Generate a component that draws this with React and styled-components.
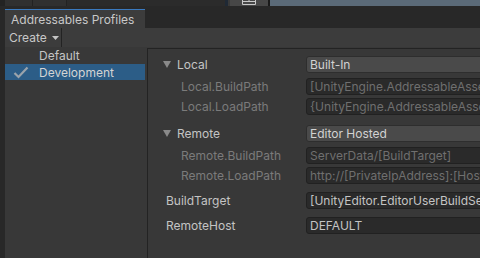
import React from "react";
import styled, { createGlobalStyle } from "styled-components";

const Global = createGlobalStyle`
  html, body { margin: 0; padding: 0; background: #282828; }
  body { font-family: Inter, "Noto Sans", sans-serif; }
  * { box-sizing: border-box; }
`;

const Screen = styled.div`
  width: 480px;
  height: 258px;
  overflow: hidden;
  display: flex;
  flex-direction: column;
  background: #282828;
  font-size: 12px;
  color: #c4c4c4;
`;

const TopStrip = styled.div`
  height: 6px;
  display: flex;
  background: #2c2c2c;
`;

const StripCell = styled.div`
  width: ${(p) => p.$w}px;
  flex: ${(p) => (p.$grow ? 1 : "none")};
  background: ${(p) => p.$bg};
  border-right: ${(p) => (p.$line ? "1px solid #222" : "none")};
  display: flex;
  justify-content: center;
`;

const TabBar = styled.div`
  height: 22px;
  display: flex;
  align-items: flex-end;
  padding-left: 5px;
  background: #282828;
`;

const Tab = styled.div`
  width: 140px;
  height: 19px;
  background: #3c3c3c;
  border-top: 1px solid #3a7ac0;
  padding: 2px 0 0 6px;
  line-height: 16px;
  color: #c8c8c8;
`;

const Window = styled.div`
  flex: 1;
  display: flex;
  flex-direction: column;
  margin-left: 5px;
  background: #383838;
  min-height: 0;
`;

const Toolbar = styled.div`
  height: 19px;
  display: flex;
  background: #3c3c3c;
`;

const ToolButton = styled.div`
  width: 57px;
  display: flex;
  align-items: center;
  gap: 5px;
  padding-left: 4px;
  border-right: 1px solid #232323;
  color: #c8c8c8;
`;

const Content = styled.div`
  flex: 1;
  display: flex;
  min-height: 0;
`;

const List = styled.div`
  width: 142px;
  padding-right: 2px;
  display: flex;
  flex-direction: column;
`;

const ListRow = styled.div`
  height: ${(p) => p.$h}px;
  display: flex;
  align-items: center;
  padding-left: 34px;
  position: relative;
  background: ${(p) => (p.$selected ? "#2c5d87" : "transparent")};
  color: ${(p) => (p.$selected ? "#d4d4d4" : "#c4c4c4")};
`;

const Check = styled.svg`
  position: absolute;
  left: 8px;
  top: 2px;
`;

const Panel = styled.div`
  flex: 1;
  margin-top: 1px;
  border-top: 1px solid #232323;
  border-left: 1px solid #232323;
  padding-top: 7px;
  overflow: hidden;
  display: flex;
  flex-direction: column;
  gap: ${(p) => p.$gap}px;
`;

const Group = styled.div`
  display: flex;
  flex-direction: column;
  gap: ${(p) => p.$gap}px;
`;

const SubRows = styled.div`
  display: flex;
  flex-direction: column;
  gap: 3px;
  padding-top: 5px;
`;

const Row = styled.div`
  height: 17px;
  display: grid;
  grid-template-columns: 158px 200px;
  align-items: center;
`;

const Label = styled.div`
  display: flex;
  align-items: center;
  gap: 6px;
  padding-left: ${(p) => p.$indent}px;
  color: ${(p) => (p.$dim ? "#7b7b7b" : "#c4c4c4")};
  white-space: nowrap;
`;

const Triangle = styled.svg`
  flex: none;
`;

const Popup = styled.div`
  height: ${(p) => p.$h || 17}px;
  border: 1px solid #2e2e2e;
  border-radius: 3px;
  background: #4a4a4a;
  padding-left: 3px;
  line-height: 15px;
  color: #d2d2d2;
  white-space: nowrap;
  overflow: hidden;
`;

const TextField = styled.div`
  height: 17px;
  border: 1px solid #212121;
  border-radius: 3px;
  background: #2a2a2a;
  padding-left: 3px;
  line-height: 15px;
  color: ${(p) => (p.$dim ? "#6f6f6f" : "#c4c4c4")};
  white-space: nowrap;
  overflow: hidden;
`;

const Fold = () => (
  <Triangle width="8" height="7" viewBox="0 0 8 7">
    <path d="M0 0 H8 L4 7 Z" fill="#8a8a8a" />
  </Triangle>
);

export default function App() {
  return (
    <Screen>
      <Global />
      <TopStrip>
        <StripCell $w={5} $bg="#232323" />
        <StripCell $w={28} $bg="#303030" $line />
        <StripCell $w={34} $bg="#303030" $line />
        <StripCell $w={158} $bg="#2b2b2b" />
        <StripCell $w={3} $bg="#1f2935" />
        <StripCell $w={2} $bg="#3a3a3a" />
        <StripCell $w={38} $bg="#474747">
          <svg width="16" height="6" viewBox="0 0 16 6">
            <path d="M1.5 0 V4.5 H14.5 V0 M1.5 1.5 H14.5 M8 0 V1.5" stroke="#c8c8c8" strokeWidth="1" fill="none" />
          </svg>
        </StripCell>
        <StripCell $w={2} $bg="#1a1a1a" />
        <StripCell $grow $bg="#5b6a78" />
      </TopStrip>
      <TabBar>
        <Tab>Addressables Profiles</Tab>
      </TabBar>
      <Window>
        <Toolbar>
          <ToolButton>
            Create
            <svg width="7" height="4" viewBox="0 0 7 4">
              <path d="M0 0 H7 L3.5 4 Z" fill="#c4c4c4" />
            </svg>
          </ToolButton>
        </Toolbar>
        <Content>
          <List>
            <ListRow $h={17}>Default</ListRow>
            <ListRow $h={16} $selected>
              <Check width="16" height="13" viewBox="0 0 16 13">
                <path d="M1.5 7 L5.5 11 L14.5 1.5" stroke="#9aa3ab" strokeWidth="2.2" fill="none" />
              </Check>
              Development
            </ListRow>
          </List>
          <Panel $gap={8}>
            <Group $gap={10}>
              <Group $gap={0}>
                <Row>
                  <Label $indent={15}>
                    <Fold />
                    Local
                  </Label>
                  <Popup>Built-In</Popup>
                </Row>
                <SubRows>
                  <Row>
                    <Label $indent={33} $dim>Local.BuildPath</Label>
                    <TextField $dim>[UnityEngine.AddressableAssets.Addressables.BuildPath]</TextField>
                  </Row>
                  <Row>
                    <Label $indent={33} $dim>Local.LoadPath</Label>
                    <TextField $dim>{"{UnityEngine.AddressableAssets.Addressables.RuntimePath}"}</TextField>
                  </Row>
                </SubRows>
              </Group>
              <Group $gap={0}>
                <Row>
                  <Label $indent={15}>
                    <Fold />
                    Remote
                  </Label>
                  <Popup>Editor Hosted</Popup>
                </Row>
                <SubRows>
                  <Row>
                    <Label $indent={33} $dim>Remote.BuildPath</Label>
                    <TextField $dim>ServerData/[BuildTarget]</TextField>
                  </Row>
                  <Row>
                    <Label $indent={33} $dim>Remote.LoadPath</Label>
                    <TextField $dim>http://[PrivateIpAddress]:[HostingServicePort]</TextField>
                  </Row>
                </SubRows>
              </Group>
            </Group>
            <Row>
              <Label $indent={18}>BuildTarget</Label>
              <TextField>[UnityEditor.EditorUserBuildSettings.activeBuildTarget]</TextField>
            </Row>
            <Row>
              <Label $indent={18}>RemoteHost</Label>
              <TextField>DEFAULT</TextField>
            </Row>
          </Panel>
        </Content>
      </Window>
    </Screen>
  );
}
